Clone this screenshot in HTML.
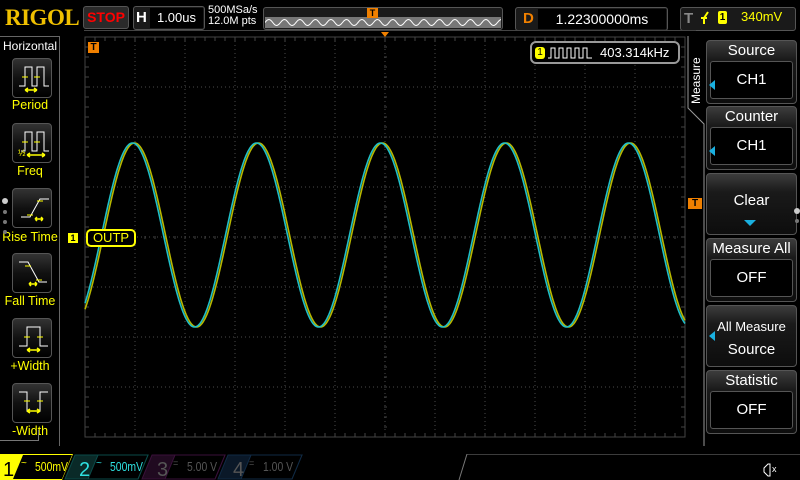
<!DOCTYPE html>
<html><head><meta charset="utf-8"><style>
*{margin:0;padding:0;box-sizing:border-box}
body{width:800px;height:480px;background:#000;overflow:hidden;position:relative;font-family:"Liberation Sans",sans-serif;color:#fff}
.a{position:absolute}
.lbl{position:absolute;color:#ff0;font-size:12.5px;text-align:center;width:60px;left:0}
.ib{position:absolute;left:12px;width:40px;height:40px;border:1px solid #555;border-radius:4px;background:linear-gradient(#333,#111 50%,#000)}
.rb{position:absolute;left:706px;width:91px;border:1px solid #555;border-radius:4px;background:linear-gradient(#3c3c3c,#1a1a1a 30%,#0d0d0d)}
.rb .t{text-align:center;font-size:15px;color:#fff;line-height:18px;margin-top:1px}
.rb .in{position:absolute;left:3px;right:3px;border:1px solid #555;border-radius:3px;background:#000;text-align:center;font-size:15px;color:#fff}
.arr{position:absolute;left:2px;width:0;height:0;border-top:5px solid transparent;border-bottom:5px solid transparent;border-right:6px solid #1ab0e0}
.bt{position:absolute;top:459px;font-size:13px;transform:scaleX(0.8);transform-origin:0 0}
</style></head><body>
<div class="a" style="left:5px;top:5px;font-family:'Liberation Serif',serif;font-weight:bold;font-size:23px;color:#f0c000;letter-spacing:-0.5px">RIGOL</div>
<div class="a" style="left:83px;top:6px;width:46px;height:23px;background:#2a2a2a;border:1px solid #555;border-radius:3px;color:#f00;font-weight:bold;font-size:14px;text-align:center;line-height:21px">STOP</div>
<div class="a" style="left:133px;top:6px;width:72px;height:24px;background:#1a1a1a;border:1px solid #555;border-radius:3px"></div>
<div class="a" style="left:136px;top:9px;font-weight:bold;font-size:15px">H</div>
<div class="a" style="left:150px;top:8px;width:53px;height:20px;background:#000;font-size:13px;text-align:center;line-height:20px">1.00us</div>
<div class="a" style="left:208px;top:5px;font-size:11px;line-height:11px">500MSa/s<br>12.0M pts</div>
<div class="a" style="left:263px;top:7px;width:240px;height:23px;background:#1a1a1a;border:1px solid #555;border-radius:3px"></div>
<div class="a" style="left:265px;top:17px;width:236px;height:11px;background:#777"></div>
<svg class="a" style="left:265px;top:17px" width="236" height="11"><path id="ov" d="" stroke="#fff" stroke-width="1" fill="none"/></svg>
<div class="a" style="left:367px;top:8px;width:11px;height:10px;background:#f08000;color:#000;font-size:9px;font-weight:bold;text-align:center;line-height:10px">T</div>
<div class="a" style="left:515px;top:7px;width:153px;height:24px;background:#1a1a1a;border:1px solid #555;border-radius:3px"></div>
<div class="a" style="left:523px;top:10px;color:#f08000;font-weight:bold;font-size:15px">D</div>
<div class="a" style="left:538px;top:9px;width:128px;height:20px;background:#000;font-size:14px;text-align:center;line-height:20px">1.22300000ms</div>
<div class="a" style="left:680px;top:7px;width:116px;height:24px;background:#1a1a1a;border:1px solid #555;border-radius:3px"></div>
<div class="a" style="left:684px;top:10px;color:#888;font-weight:bold;font-size:15px">T</div>
<svg class="a" style="left:698px;top:10px" width="14" height="16"><path d="M3 8H9M6 8V14M6 8L10 2" stroke="#ff0" stroke-width="2" fill="none"/></svg>
<div class="a" style="left:718px;top:11px;width:9px;height:13px;background:#ff0;border-radius:2px;color:#000;font-size:10px;font-weight:bold;text-align:center;line-height:13px">1</div>
<div class="a" style="left:741px;top:9px;color:#ff0;font-size:13px">340mV</div>
<div class="a" style="left:0;top:36px;width:60px;height:1px;background:#666"></div>
<div class="a" style="left:59px;top:36px;width:1px;height:410px;background:#666"></div>
<div class="a" style="left:3px;top:39px;font-size:12px">Horizontal</div>
<div class="ib" style="top:58px"><svg width="40" height="40"><path d="M6 27H12V8H19V27H24V8H31V27H36" stroke="#fff" fill="none"/><path d="M9 18h6M21 18h6" stroke="#ff0"/><path d="M12 31H24M12 31l3-2M12 31l3 2M24 31l-3-2M24 31l-3 2" stroke="#ff0" stroke-width="1.5"/></svg></div>
<div class="lbl" style="top:98px">Period</div>
<div class="ib" style="top:123px"><svg width="40" height="40"><path d="M8 27H12V8H19V27H24V8H31V27H36" stroke="#fff" fill="none"/><path d="M9 18h6M21 18h6" stroke="#ff0"/><path d="M14 31H32M14 31l3-2M14 31l3 2M32 31l-3-2M32 31l-3 2" stroke="#ff0" stroke-width="1.5"/><text x="5" y="32" fill="#ff0" font-size="9">½</text></svg></div>
<div class="lbl" style="top:164px">Freq</div>
<div class="ib" style="top:188px"><svg width="40" height="40"><path d="M8 28H17L27 10H36" stroke="#fff" fill="none"/><path d="M14 26h6M24 12h6" stroke="#ff0"/><path d="M22 30H30M22 30l2-2M22 30l2 2M30 30l-2-2M30 30l-2 2" stroke="#ff0" stroke-width="1.5"/></svg></div>
<div class="lbl" style="top:230px;left:-2px;width:64px">Rise Time</div>
<div class="ib" style="top:253px"><svg width="40" height="40"><path d="M6 8H15L26 28H34" stroke="#fff" fill="none"/><path d="M12 12h6M23 26h6" stroke="#ff0"/><path d="M16 30H24M16 30l2-2M16 30l2 2M24 30l-2-2M24 30l-2 2" stroke="#ff0" stroke-width="1.5"/></svg></div>
<div class="lbl" style="top:294px">Fall Time</div>
<div class="ib" style="top:318px"><svg width="40" height="40"><path d="M6 27H14V8H27V27H35" stroke="#fff" fill="none"/><path d="M11 18h6M24 18h6" stroke="#ff0"/><path d="M14 31H27M14 31l3-2M14 31l3 2M27 31l-3-2M27 31l-3 2" stroke="#ff0" stroke-width="1.5"/></svg></div>
<div class="lbl" style="top:359px">+Width</div>
<div class="ib" style="top:383px"><svg width="40" height="40"><path d="M6 8H14V27H27V8H35" stroke="#fff" fill="none"/><path d="M11 17h6M24 17h6" stroke="#ff0"/><path d="M14 27H27M14 27l3-2M14 27l3 2M27 27l-3-2M27 27l-3 2" stroke="#ff0" stroke-width="1.5"/></svg></div>
<div class="lbl" style="top:424px">-Width</div>
<div class="a" style="left:2px;top:198px;width:6px;height:6px;border-radius:3px;background:#ccc"></div>
<div class="a" style="left:3px;top:210px;width:4px;height:4px;border-radius:2px;background:#777"></div>
<div class="a" style="left:3px;top:220px;width:4px;height:4px;border-radius:2px;background:#777"></div>
<div class="a" style="left:3px;top:230px;width:4px;height:4px;border-radius:2px;background:#777"></div>
<div class="a" style="left:84px;top:30px;width:612px;height:1px;background:#444"></div>
<svg class="a" style="left:0;top:0" width="800" height="480" id="g"></svg>
<svg class="a" style="left:686px;top:36px" width="22" height="410"><path d="M2 0V72L18 88V410" stroke="#999" fill="none"/></svg>
<div class="a" style="left:689px;top:104px;transform:rotate(-90deg);transform-origin:0 0;font-size:12px">Measure</div>
<div class="rb" style="top:40px;height:64px"><div class="t">Source</div><div class="in" style="top:20px;height:38px;line-height:36px">CH1</div><div class="arr" style="top:39px"></div></div>
<div class="rb" style="top:106px;height:64px"><div class="t">Counter</div><div class="in" style="top:20px;height:38px;line-height:36px">CH1</div><div class="arr" style="top:39px"></div></div>
<div class="rb" style="top:173px;height:62px"><div class="t" style="margin-top:18px">Clear</div><div class="a" style="left:37px;top:46px;border-left:6px solid transparent;border-right:6px solid transparent;border-top:6px solid #1ab0e0"></div></div>
<div class="rb" style="top:238px;height:64px"><div class="t">Measure All</div><div class="in" style="top:20px;height:38px;line-height:36px">OFF</div></div>
<div class="rb" style="top:305px;height:62px"><div class="t" style="margin-top:12px;font-size:13px">All Measure</div><div class="t" style="margin-top:5px">Source</div><div class="arr" style="top:25px"></div></div>
<div class="rb" style="top:370px;height:64px"><div class="t">Statistic</div><div class="in" style="top:20px;height:38px;line-height:36px">OFF</div></div>
<div class="a" style="left:794px;top:208px;width:6px;height:6px;border-radius:3px;background:#ccc"></div>
<div class="a" style="left:795px;top:219px;width:4px;height:4px;border-radius:2px;background:#777"></div>
<div class="a" style="left:88px;top:42px;width:11px;height:11px;background:#f08000;color:#000;font-size:10px;font-weight:bold;text-align:center;line-height:11px">T</div>
<div class="a" style="left:688px;top:198px;width:14px;height:11px;background:#f08000;color:#000;font-size:10px;font-weight:bold;text-align:center;line-height:11px">T</div>
<div class="a" style="left:68px;top:233px;width:10px;height:10px;background:#ff0;color:#000;font-size:9px;font-weight:bold;text-align:center;line-height:10px">1</div>
<div class="a" style="left:86px;top:229px;width:50px;height:18px;border:2px solid #ff0;border-radius:5px;background:#000;color:#ff0;font-size:13px;text-align:center;line-height:14px">OUTP</div>
<div class="a" style="left:530px;top:41px;width:150px;height:23px;border:2px solid #999;border-radius:6px;background:#000"></div>
<div class="a" style="left:535px;top:47px;width:10px;height:12px;background:#ff0;border-radius:3px;color:#000;font-size:10px;text-align:center;line-height:12px">1</div>
<svg class="a" style="left:548px;top:45px" width="45" height="16"><path d="M0 13H3V3H7V13H11V3H15V13H19V3H23V13H27V3H31V13H35V3H39V13H44" stroke="#fff" fill="none"/></svg>
<div class="a" style="left:600px;top:45px;font-size:13px">403.314kHz</div>
<div class="a" style="left:0;top:440px;width:39px;height:1px;background:#777"></div>
<div class="a" style="left:38px;top:430px;width:1px;height:10px;background:#777"></div>
<svg class="a" style="left:0;top:454px" width="800" height="26" font-family="Liberation Sans">
<polygon points="0,0 73,0 62,26 0,26" fill="#ff0"/>
<polygon points="23,1 72,1 62,25 13,25" fill="#000"/>
<text x="3" y="22" font-size="20" fill="#000">1</text>
<text x="21" y="12" font-size="10" fill="#ff0">~</text>
<polygon points="75,1 148,1 138,25 65,25" fill="#0a2a28" stroke="#0a4a48"/>
<polygon points="98,1 148,1 138,25 88,25" fill="#000" stroke="#0a4a48"/>
<text x="79" y="22" font-size="20" fill="#2ee0e0">2</text>
<text x="96" y="12" font-size="10" fill="#2ee0e0">~</text>
<polygon points="152,1 225,1 215,25 142,25" fill="#200a20" stroke="#3a103a"/>
<polygon points="175,1 225,1 215,25 165,25" fill="#000" stroke="#3a103a"/>
<text x="157" y="22" font-size="20" fill="#555">3</text>
<text x="173" y="12" font-size="9" fill="#555">=</text>
<polygon points="228,1 302,1 292,25 218,25" fill="#0a1828" stroke="#102a44"/>
<polygon points="251,1 302,1 292,25 241,25" fill="#000" stroke="#102a44"/>
<text x="233" y="22" font-size="20" fill="#555">4</text>
<text x="249" y="12" font-size="9" fill="#555">=</text>
<path d="M459 26L467 0H800" stroke="#777" fill="none"/>
<path d="M764 14l4-4h2v12h-2l-4-4z" stroke="#fff" fill="none"/><text x="772" y="18" font-size="9" fill="#fff">x</text>
</svg>
<div class="bt" style="left:35px;color:#ff0">500mV</div>
<div class="bt" style="left:110px;color:#2ee0e0">500mV</div>
<div class="bt" style="left:187px;color:#555">5.00 V</div>
<div class="bt" style="left:263px;color:#555">1.00 V</div>
<script>
var g=document.getElementById('g'),s='';
var L=85,T=37,W=600,H=400;
s+='<rect x="'+L+'" y="'+T+'" width="'+W+'" height="'+H+'" fill="none" stroke="#444"/>';
for(var i=1;i<12;i++){s+='<line x1="'+(L+i*50)+'" y1="'+T+'" x2="'+(L+i*50)+'" y2="'+(T+H)+'" stroke="#4a4a4a" stroke-dasharray="1 3"/>';}
for(var j=1;j<8;j++){s+='<line x1="'+L+'" y1="'+(T+j*50)+'" x2="'+(L+W)+'" y2="'+(T+j*50)+'" stroke="#4a4a4a" stroke-dasharray="1 3"/>';}
for(var x=L;x<=L+W;x+=10){s+='<line x1="'+x+'" y1="'+T+'" x2="'+x+'" y2="'+(T+4)+'" stroke="#444"/><line x1="'+x+'" y1="'+(T+H-4)+'" x2="'+x+'" y2="'+(T+H)+'" stroke="#444"/><line x1="'+x+'" y1="'+(T+199)+'" x2="'+x+'" y2="'+(T+202)+'" stroke="#444"/>';}
for(var y=T;y<=T+H;y+=10){s+='<line x1="'+L+'" y1="'+y+'" x2="'+(L+4)+'" y2="'+y+'" stroke="#444"/><line x1="'+(L+W-4)+'" y1="'+y+'" x2="'+(L+W)+'" y2="'+y+'" stroke="#444"/><line x1="'+(L+299)+'" y1="'+y+'" x2="'+(L+302)+'" y2="'+y+'" stroke="#444"/>';}
function wave(off,c){var d='';for(var x=L;x<=L+W;x+=1){var y=235-92*Math.cos(2*Math.PI*(x-133-off)/124);d+=(x==L?'M':'L')+x+' '+y.toFixed(1);}return '<path d="'+d+'" stroke="'+c+'" stroke-width="1.6" fill="none"/>';}
s+=wave(1.5,'#b8b800')+wave(-0.5,'#20c0c8');
s+='<path d="M385 37l-4-5h8z" fill="#f08000"/>';
g.innerHTML=s;
var d='';for(var x=0;x<=236;x++){var y=5.5-3*Math.sin(x*2*Math.PI/15.5);d+=(x?'L':'M')+x+' '+y.toFixed(1);}document.getElementById('ov').setAttribute('d',d);
</script>
</body></html>
